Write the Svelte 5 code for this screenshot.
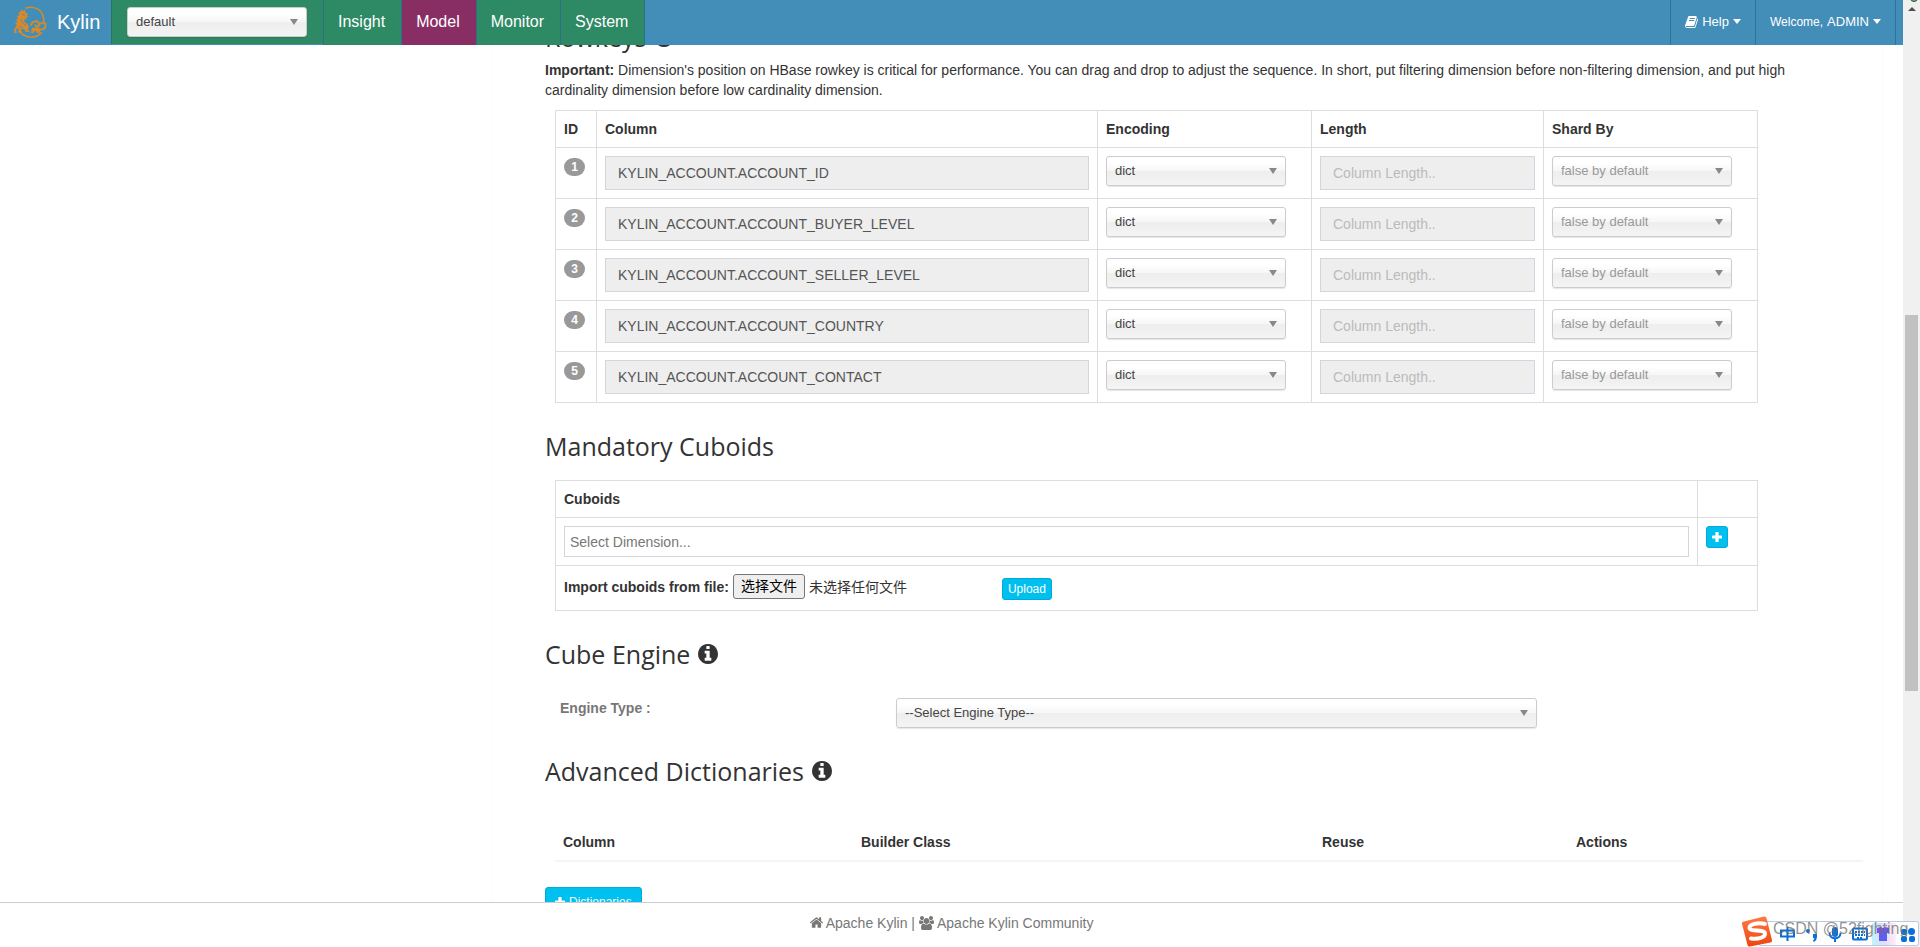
<script>
  let project = $state('default');

  const tabs = ['Insight', 'Model', 'Monitor', 'System'];
  let activeTab = $state('Model');

  let rowkeys = $state([
    { column: 'KYLIN_ACCOUNT.ACCOUNT_ID', encoding: 'dict' },
    { column: 'KYLIN_ACCOUNT.ACCOUNT_BUYER_LEVEL', encoding: 'dict' },
    { column: 'KYLIN_ACCOUNT.ACCOUNT_SELLER_LEVEL', encoding: 'dict' },
    { column: 'KYLIN_ACCOUNT.ACCOUNT_COUNTRY', encoding: 'dict' },
    { column: 'KYLIN_ACCOUNT.ACCOUNT_CONTACT', encoding: 'dict' }
  ]);

  const encodings = ['dict', 'fixed_length', 'int', 'integer', 'date', 'time', 'boolean'];
  const engines = ['MapReduce', 'Spark', 'Flink'];
  let engine = $state('');
</script>

{#snippet info()}
  <svg class="info" viewBox="0 0 1536 1536" aria-hidden="true">
    <path fill="currentColor" d="M1024 1248v-160q0-14-9-23t-23-9h-96V544q0-14-9-23t-23-9H544q-14 0-23 9t-9 23v160q0 14 9 23t23 9h96v320h-96q-14 0-23 9t-9 23v160q0 14 9 23t23 9h448q14 0 23-9t9-23zM896 352V192q0-14-9-23t-23-9H672q-14 0-23 9t-9 23v160q0 14 9 23t23 9h192q14 0 23-9t9-23zm640 416q0 209-103 385.500T1153.500 1433 768 1536t-385.500-103T103 1153.500 0 768t103-385.500T382.500 103 768 0t385.500 103T1433 382.500 1536 768z" />
  </svg>
{/snippet}

{#snippet plus()}
  <svg class="plus" viewBox="0 0 10 10" aria-hidden="true">
    <path fill="currentColor" d="M4 0h2q.6 0 .6.600V3.400h2.800q.6 0 .6.600v2q0 .6-.6.600H6.600v2.800q0 .6-.6.600H4q-.6 0-.6-.600V6.600H.6Q0 6.600 0 6V4q0-.6.600-.600h2.800V.6Q3.400 0 4 0z" />
  </svg>
{/snippet}

<div class="window">
  <div class="app">
    <header class="navbar">
      <a class="brand" href="#home">
        <svg class="logo" viewBox="0 0 34 32" aria-hidden="true">
          <g fill="none" stroke="#d98a28" stroke-linecap="round">
            <path stroke-width="1.500" d="M13 2C20-.5 29 3 30.500 12c.3 1.500.3 3 .1 4.500" />
            <path stroke-width="1.500" d="M7 26c4 5 11 6.500 17 4 2-.8 3.500-2 4.500-3.500" />
            <path stroke-width="1.800" d="M18 19c1-4.500 7-5 8-1 .5 3-3 3.500-3.500 1.200M27 18c2-2.500 5.500-1.500 5.500 1.500 0 4-4.500 5-7.500 3" />
          </g>
          <path fill="#d98a28" d="M8 3l1.500 2L12 4l.5 2.500L15 8l-1 1.500 1.500 1-2.500 1 1 1.500-3 .5.500 2.500 3 2 1.500 3-1.500 2.500 2 1-.5 1.500h-3.500l-1-2.500-3-1-.5 2 1.500 2H5l.5-3.500L4.500 22 3 24l1 3H1l.5-4.500L4 19l-2-1.500L4.500 16 3 14l2-1.500L4 10l2-.5-.5-3L7.500 6z" />
          <path fill="#d98a28" d="M19 22l4.500-.5 4 2.500-1 3h-2.500l-1-2-2 .5-.5 1.500h-2.500z" />
          <path stroke="#438eb9" stroke-width=".8" fill="none" d="M9 8.500l3 .5M8 13l1.500 4 4 2.500M6 20l4 2" />
        </svg>
        <span>Kylin</span>
      </a>

      <div class="project">
        <span class="chosen">
          <select bind:value={project} aria-label="Project">
            <option>default</option>
            <option>learn_kylin</option>
          </select>
        </span>
      </div>

      <nav class="tabs">
        {#each tabs as tab}
          <a href="#{tab.toLowerCase()}" class:active={tab === activeTab} onclick={() => (activeTab = tab)}>{tab}</a>
        {/each}
      </nav>

      <div class="user-menu">
        <button type="button" class="help">
          <svg class="book" viewBox="0 0 1664 1536" aria-hidden="true">
            <path fill="currentColor" d="M1639 350q40 57 18 129l-275 906q-19 64-76.500 107.500T1183 1536H260q-77 0-148.500-53.500T12 1351q-24-67-2-127 0-4 3-27t4-37q1-8-3-21.500t-3-19.500q2-11 8-21t16.500-23.500T52 1051q23-38 45-91.500t30-91.500q3-10 .5-30t-.5-28q3-11 17-28t17-23q21-36 42-92t25-90q1-9-2.500-32t.5-28q4-13 22-30.500t22-22.500q19-26 42.500-84.500T340 283q1-8-3-25.500t-2-26.500q2-8 9-18t18-23 17-21q8-12 16.500-30.500t15-35 16-36 19.500-32T472.500 12t36-11.500T556 6l-1 3q38-9 51-9h761q74 0 114 56t18 130l-274 906q-36 119-71.500 153.500T1025 1280H156q-27 0-38 15-11 16-1 43 24 70 144 70h923q29 0 56-15.500t35-41.500l300-987q7-22 5-57 38 15 59 43zM575 352q-4 13 2 22.500t20 9.500h608q13 0 25.500-9.500T1247 352l21-64q4-13-2-22.500t-20-9.500H638q-13 0-25.500 9.500T596 288zm-83 256q-4 13 2 22.500t20 9.500h608q13 0 25.500-9.500T1164 608l21-64q4-13-2-22.500t-20-9.500H555q-13 0-25.500 9.500T513 544z" />
          </svg>
          Help <i class="caret"></i>
        </button>
        <button type="button" class="welcome"><small>Welcome,</small> ADMIN <i class="caret"></i></button>
      </div>
    </header>

    <main class="content">
      <section class="panel">
        <h3>Rowkeys {@render info()}</h3>
        <p class="hint">
          <b>Important:</b> Dimension's position on HBase rowkey is critical for performance. You can drag and drop to adjust the sequence. In short, put filtering dimension before non-filtering dimension, and put high cardinality dimension before low cardinality dimension.
        </p>

        <table class="bordered">
          <colgroup>
            <col class="col-id" />
            <col />
            <col class="col-select" />
            <col class="col-length" />
            <col class="col-select" />
          </colgroup>
          <thead>
            <tr>
              <th>ID</th>
              <th>Column</th>
              <th>Encoding</th>
              <th>Length</th>
              <th>Shard By</th>
            </tr>
          </thead>
          <tbody>
            {#each rowkeys as row, i}
              <tr>
                <td><span class="badge">{i + 1}</span></td>
                <td><input class="field" type="text" value={row.column} aria-label="Column" disabled /></td>
                <td>
                  <span class="chosen">
                    <select bind:value={row.encoding} aria-label="Encoding">
                      {#each encodings as name}
                        <option>{name}</option>
                      {/each}
                    </select>
                  </span>
                </td>
                <td><input class="field" type="text" placeholder="Column Length.." aria-label="Length" disabled /></td>
                <td>
                  <span class="chosen">
                    <select class="muted" aria-label="Shard By">
                      <option>false by default</option>
                      <option>true</option>
                    </select>
                  </span>
                </td>
              </tr>
            {/each}
          </tbody>
        </table>

        <h3>Mandatory Cuboids</h3>
        <table class="bordered">
          <colgroup>
            <col />
            <col class="col-add" />
          </colgroup>
          <thead>
            <tr>
              <th>Cuboids</th>
              <th></th>
            </tr>
          </thead>
          <tbody>
            <tr>
              <td><input class="dimension" type="text" placeholder="Select Dimension..." aria-label="Cuboid dimensions" /></td>
              <td><button type="button" class="btn add" aria-label="Add cuboid">{@render plus()}</button></td>
            </tr>
            <tr>
              <td colspan="2">
                <div class="import">
                  <label class="file">
                    <b>Import cuboids from file:</b>
                    <input type="file" />
                    <span class="file-button">选择文件</span>
                    <span class="file-name">未选择任何文件</span>
                  </label>
                  <button type="button" class="btn">Upload</button>
                </div>
              </td>
            </tr>
          </tbody>
        </table>

        <h3>Cube Engine {@render info()}</h3>
        <div class="engine">
          <label for="engine">Engine Type :</label>
          <span class="chosen">
            <select id="engine" bind:value={engine}>
              <option value="">--Select Engine Type--</option>
              {#each engines as name}
                <option>{name}</option>
              {/each}
            </select>
          </span>
        </div>

        <h3>Advanced Dictionaries {@render info()}</h3>
        <table class="dictionaries">
          <thead>
            <tr>
              <th class="dict-column">Column</th>
              <th class="dict-builder">Builder Class</th>
              <th class="dict-reuse">Reuse</th>
              <th>Actions</th>
            </tr>
          </thead>
        </table>
        <button type="button" class="btn large">{@render plus()} Dictionaries</button>
      </section>
    </main>

    <footer class="footer">
      <a href="#kylin">
        <svg class="home" viewBox="0 0 1612 1283" aria-hidden="true">
          <path fill="currentColor" d="M1382 739v480q0 26-19 45t-45 19H934V899H678v384H294q-26 0-45-19t-19-45V739q0-1 .5-3t.5-3l575-474 575 474q1 2 1 6zm223-69l-62 74q-8 9-21 11h-3q-13 0-21-7L806 171 114 748q-12 8-24 7-13-2-21-11L7 670q-8-10-7-23.500T11 625L730 26q32-26 76-26t76 26l244 204V35q0-14 9-23t23-9h192q14 0 23 9t9 23v408l219 182q10 8 11 21.500t-7 23.500z" />
        </svg>
        Apache Kylin
      </a>
      |
      <a href="#community">
        <svg class="users" viewBox="0 0 1920 1792" aria-hidden="true">
          <path fill="currentColor" d="M593 896q-162 5-265 128H194q-82 0-138-40.500T0 865q0-353 124-353 6 0 43.500 21t97.500 42.500T384 597q67 0 133-23-5 37-5 66 0 139 81 256zm1071 637q0 120-73 189.500t-194 69.500H523q-121 0-194-69.500T256 1533q0-53 3.500-103.500t14-109T300 1212t43-97.500 62-81 85.500-53.500T602 960q10 0 43 21.500t73 48 107 48 135 21.500 135-21.500 107-48 73-48 43-21.500q61 0 111.500 20t85.500 53.500 62 81 43 97.500 26.500 108.500 14 109 3.500 103.500zM640 256q0 106-75 181t-181 75-181-75-75-181 75-181T384 0t181 75 75 181zm704 384q0 159-112.500 271.500T960 1024 688.500 911.500 576 640t112.500-271.500T960 256t271.500 112.500T1344 640zm576 225q0 78-56 118.500t-138 40.500h-134q-103-123-265-128 81-117 81-256 0-29-5-66 66 23 133 23 59 0 119-21.500t97.500-42.500 43.500-21q124 0 124 353zm-128-609q0 106-75 181t-181 75-181-75-75-181 75-181T1536 0t181 75 75 181z" />
        </svg>
        Apache Kylin Community
      </a>
    </footer>
  </div>

  <div class="scrollbar">
    <i class="online"></i>
    <i class="up"></i>
    <i class="thumb"></i>
  </div>

  <!-- input method bar floating over the page -->
  <div class="ime">
    <svg viewBox="0 0 180 32" aria-hidden="true">
      <defs>
        <linearGradient id="imeGlow" x1="0" x2="1">
          <stop offset="0" stop-color="#bff3fb" />
          <stop offset=".5" stop-color="#e6d9fb" />
          <stop offset="1" stop-color="#fdeef8" />
        </linearGradient>
        <linearGradient id="shirt" x1="0" x2="1" y2="1">
          <stop offset="0" stop-color="#8a4be8" />
          <stop offset="1" stop-color="#3f6cf5" />
        </linearGradient>
        <linearGradient id="sogou" x2="0" y2="1">
          <stop offset="0" stop-color="#ff7a45" />
          <stop offset="1" stop-color="#ee4410" />
        </linearGradient>
      </defs>
      <rect x="18.500" y="6.500" width="160" height="24" rx="2" fill="#fff" stroke="#b7cbe2" />
      <rect x="132" y="8" width="24" height="22" fill="url(#imeGlow)" />
      <g fill="none" stroke="#0b6fd8" stroke-width="2">
        <path d="M41 15.500h13v6H41zM47.500 12v14" />
        <path d="M89.500 18c0 7 11 7 11 0M95 23v4" />
        <rect x="113" y="13.500" width="14" height="11" rx="1" />
        <path d="M115 17h10M115 20h10M117 23h6" stroke-dasharray="2 1" />
      </g>
      <g fill="#0b6fd8">
        <circle cx="68" cy="16" r="2" />
        <path d="M73 19h4v3q0 3-3 5l-1-1 1.500-3H73z" />
        <rect x="92" y="12" width="6" height="10" rx="3" />
        <rect x="161" y="14" width="6" height="6" rx="2" />
        <circle cx="171.500" cy="16.500" r="3.500" />
        <rect x="161" y="21" width="6" height="6" rx="2" />
        <rect x="169" y="21" width="6" height="6" rx="2" />
      </g>
      <path fill="url(#shirt)" d="M137 13l4-1q2 2 4 0l4 1v5h-2v8h-8v-8h-2z" />
      <path fill="url(#sogou)" d="M4 6.500L24 1.500q2-.4 2.500 1.500L32 25q.5 2-1.500 2.500L10 31.500q-2 .5-2.500-1.500L2 9q-.5-2 2-2.500z" />
      <path fill="none" stroke="#fff" stroke-width="4" stroke-linecap="round" d="M25 9C18 7 9 9.500 9.500 13c.5 4 15 1 15.500 5.500.4 4-7 6-14 5" />
    </svg>
    <span class="watermark">CSDN @52fighting</span>
  </div>
</div>

<style>
  :global(body) {
    margin: 0;
    background: #fff;
  }

  .window {
    position: relative;
    display: flex;
    height: 100vh;
    overflow: hidden;
    color: #333;
    font: 14px/20px 'Liberation Sans', 'Noto Sans CJK SC', sans-serif;
  }

  .window :global(*) {
    box-sizing: border-box;
  }

  .app {
    flex: 1;
    min-width: 0;
    display: flex;
    flex-direction: column;
  }

  a {
    color: inherit;
    text-decoration: none;
  }

  button,
  input,
  select {
    font-family: inherit;
    margin: 0;
  }

  /* navbar */
  .navbar {
    flex: none;
    display: flex;
    height: 45px;
    background: #438eb9;
    color: #fff;
  }

  .brand {
    display: flex;
    align-items: center;
    gap: 10px;
    width: 111px;
    padding-left: 13px;
    padding-bottom: 2px;
    font-size: 20px;
  }

  .logo {
    width: 34px;
    height: 32px;
  }

  .project {
    width: 212px;
    height: 44px;
    padding: 7px 16px 0 15px;
    background: #2e8965;
    border-left: 1px solid #277556;
  }

  .tabs {
    display: flex;
    font-size: 16px;
    line-height: 43px;
  }

  .tabs a {
    padding: 0 16px 2px 14px;
    background: #2e8965;
    border-left: 1px solid #2c6f86;
  }

  .tabs a:last-child {
    border-right: 1px solid #2c6f86;
  }

  .tabs a.active {
    background: #892e65;
  }

  .user-menu {
    display: flex;
    margin-left: auto;
    padding-right: 7px;
  }

  .user-menu button {
    display: flex;
    align-items: center;
    gap: 4px;
    padding: 0 14px 2px;
    border: 0;
    border-left: 1px solid #2c7399;
    background: none;
    color: #fff;
    font-size: 13px;
  }

  .user-menu .welcome {
    border-right: 1px solid #2c7399;
  }

  .user-menu small {
    font-size: 12px;
  }

  .book {
    width: 13px;
    height: 12px;
  }

  .caret {
    border: 4px solid transparent;
    border-top: 5px solid #fff;
    border-bottom: 0;
  }

  /* content */
  .content {
    flex: 1;
    min-height: 0;
    display: flex;
    overflow: hidden;
    padding-left: 492px;
  }

  .panel {
    flex: 1;
    margin: -21px 20px 0 0;
    padding: 0 19px 0 52px;
    border-left: 1px solid #fbfbfb;
    border-right: 1px solid #fbfbfb;
    min-width: 0;
  }

  h3 {
    display: flex;
    align-items: center;
    gap: 8px;
    margin: 30px 0 21px;
    font-family: 'Open Sans', sans-serif;
    font-size: 25px;
    font-weight: 400;
    line-height: 26px;
  }

  .panel h3:first-child {
    margin: 0 0 10px;
  }

  .info {
    width: 20px;
    height: 20px;
  }

  .hint {
    margin: 0 70px 10px 0;
  }

  table {
    border-collapse: collapse;
    table-layout: fixed;
  }

  th,
  td {
    padding: 8px;
    text-align: left;
    vertical-align: top;
  }

  .bordered {
    width: calc(100% - 115px);
    margin-left: 10px;
  }

  .bordered th,
  .bordered td {
    border: 1px solid #ddd;
  }

  .col-id {
    width: 41px;
  }

  .col-select {
    width: 214px;
  }

  .col-length {
    width: 232px;
  }

  .col-add {
    width: 60px;
  }

  .badge {
    display: block;
    width: 21px;
    margin-top: 2px;
    border-radius: 9px;
    background: #999;
    color: #fff;
    font-size: 12px;
    font-weight: 700;
    line-height: 18px;
    text-align: center;
  }

  .field {
    display: block;
    width: 100%;
    height: 34px;
    padding: 6px 12px;
    border: 1px solid #d2d6de;
    border-radius: 0;
    background: #eee;
    color: #555;
    font-size: 14px;
  }

  .field::placeholder {
    color: #bbb;
  }

  .dimension {
    display: block;
    width: 100%;
    height: 31px;
    padding: 0 5px;
    border: 1px solid #d2d6de;
    font-size: 14px;
  }

  .dimension::placeholder {
    color: #777;
  }

  .chosen {
    position: relative;
    display: block;
    width: 180px;
  }

  .chosen::after {
    content: '';
    position: absolute;
    top: 12px;
    right: 9px;
    border: 4px solid transparent;
    border-top: 6px solid #888;
    border-bottom: 0;
    pointer-events: none;
  }

  .chosen select {
    display: block;
    width: 100%;
    height: 30px;
    padding: 0 26px 2px 8px;
    appearance: none;
    border: 1px solid #ccc;
    border-radius: 3px;
    background: linear-gradient(#fff 20%, #f6f6f6 50%, #eee 52%, #f4f4f4 100%);
    box-shadow: 0 1px 1px rgba(0, 0, 0, 0.1);
    color: #444;
    font-size: 13px;
  }

  .chosen select.muted {
    color: #999;
  }

  .btn {
    display: inline-flex;
    align-items: center;
    justify-content: center;
    gap: 4px;
    height: 22px;
    padding: 0 5px;
    border: 1px solid #00acd6;
    border-radius: 3px;
    background: #00c0ef;
    color: #fff;
    font-size: 12px;
    line-height: 18px;
  }

  .btn.add {
    display: flex;
    width: 22px;
  }

  .btn.large {
    height: 30px;
    margin-top: 25px;
    padding: 0 9px;
  }

  .plus {
    width: 10px;
    height: 10px;
  }

  .import {
    display: flex;
    align-items: flex-start;
    gap: 95px;
    height: 28px;
  }

  .import .btn {
    margin-top: 4px;
  }

  .file {
    position: relative;
    display: flex;
    align-items: center;
    gap: 4px;
  }

  .file input {
    position: absolute;
    width: 100%;
    height: 100%;
    opacity: 0;
  }

  .file-button {
    padding: 0 7px;
    border: 1px solid #767676;
    border-radius: 3px;
    background: #efefef;
    color: #000;
    line-height: 23px;
  }

  .engine {
    display: flex;
    align-items: flex-start;
    margin-top: 31px;
    padding-left: 15px;
  }

  .engine label {
    width: 336px;
    color: #777;
    font-weight: 700;
  }

  .engine .chosen {
    width: 641px;
  }

  .dictionaries {
    width: calc(100% - 10px);
    margin: 40px 0 0 10px;
  }

  .dictionaries th {
    border-bottom: 2px solid #f4f4f4;
  }

  .dict-column {
    width: 298px;
  }

  .dict-builder {
    width: 461px;
  }

  .dict-reuse {
    width: 254px;
  }

  /* footer */
  .footer {
    flex: none;
    height: 45px;
    padding-top: 10px;
    border-top: 1px solid #ccc;
    background: #fff;
    color: #777;
    text-align: center;
  }

  .home {
    width: 13px;
    height: 11px;
  }

  .users {
    width: 15px;
    height: 14px;
    vertical-align: -2px;
  }

  /* window chrome */
  .scrollbar {
    position: relative;
    flex: none;
    width: 17px;
    background: #f0f0f0;
  }

  .scrollbar i {
    position: absolute;
  }

  .online {
    top: -6px;
    left: 7px;
    width: 8px;
    height: 8px;
    border-radius: 50%;
    background: #3ad35a;
    border: 1px solid #444;
  }

  .up {
    top: 7px;
    left: 5px;
    border: 4px solid transparent;
    border-top: 0;
    border-bottom-color: #505050;
  }

  .thumb {
    top: 315px;
    left: 2px;
    width: 13px;
    height: 376px;
    background: #c1c1c1;
  }

  .ime {
    position: absolute;
    right: 0;
    bottom: 0;
    width: 180px;
    height: 32px;
  }

  .ime svg {
    display: block;
    width: 180px;
    height: 32px;
  }

  .watermark {
    position: absolute;
    top: 4px;
    left: 33px;
    color: rgba(110, 110, 110, 0.75);
    font-size: 16px;
    white-space: nowrap;
  }
</style>
